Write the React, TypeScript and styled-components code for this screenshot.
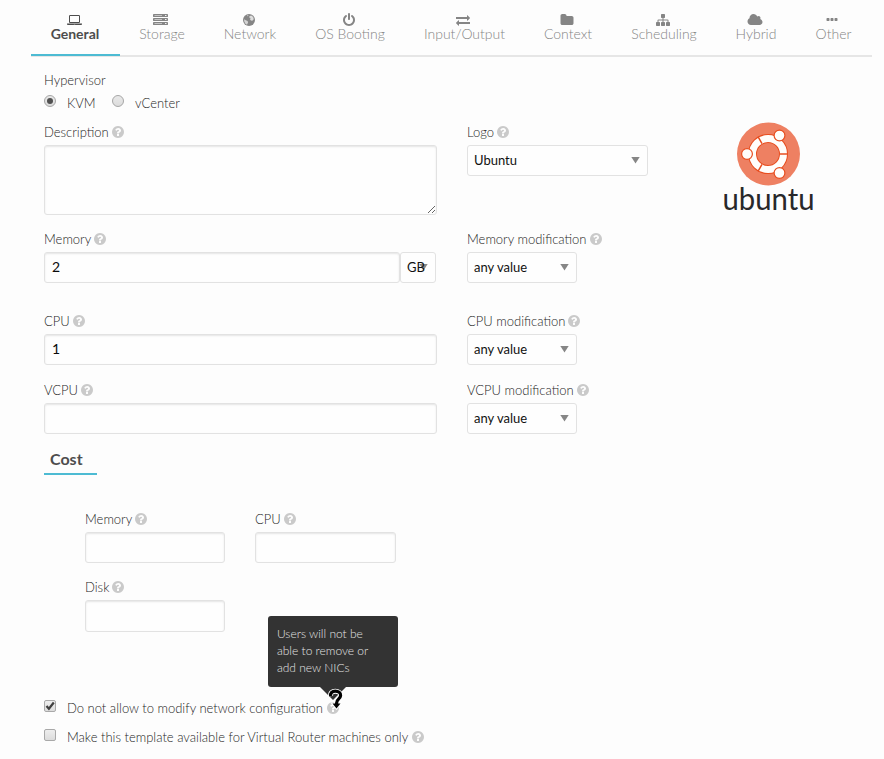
import React from "react";
import styled, { createGlobalStyle } from "styled-components";

const GlobalStyle = createGlobalStyle`
  *, *::before, *::after { box-sizing: border-box; }
  body {
    margin: 0;
    background: #fdfdfd;
    color: #4d4d4d;
    font-family: Lato, "Open Sans", sans-serif;
    font-size: 14px;
    font-weight: 300;
  }
`;

const Page = styled.main`
  width: 884px;
  height: 759px;
  overflow: hidden;
  padding-left: 31px;
`;

const Tabs = styled.nav`
  display: grid;
  grid-template-columns: 89px 84px 92px 108px 121px 86px 106px 78px 77px;
  width: 841px;
  height: 57px;
  border-bottom: 2px solid #e6e6e6;
`;

const Tab = styled.a<{ $active?: boolean }>`
  display: flex;
  flex-direction: column;
  align-items: center;
  height: 56px;
  padding-top: 13px;
  color: ${(p) => (p.$active ? "#4d4d4d" : "#858585")};
  font-weight: ${(p) => (p.$active ? 700 : 300)};
  line-height: 14px;
  white-space: nowrap;
  border-bottom: 2px solid ${(p) => (p.$active ? "#4dbbd3" : "transparent")};
  ${(p) => p.$active && "padding-right: 1px;"}
  svg { display: block; flex: none; margin-right: ${(p) => (p.$active ? 1 : 3)}px; }
`;

const Form = styled.form`
  padding: 12px 0 0 13px;
  color: #262626;
  font-size: 13px;
`;

const Label = styled.label`
  display: flex;
  align-items: center;
  gap: 3px;
  height: 24px;
  padding-bottom: 2px;
  line-height: 22px;
  white-space: nowrap;
`;

const Help = styled.svg`
  display: block;
  flex: none;
  width: 12px;
  height: 12px;
  fill: #cacaca;
`;

const Radios = styled.div`
  display: flex;
  align-items: center;
  height: 22px;
  padding-bottom: 2px;
`;

const Radio = styled.span`
  display: flex;
  width: 12px;
  height: 12px;
  margin-top: -4px;
  align-items: center;
  justify-content: center;
  border: 1px solid #a6a6a6;
  border-radius: 50%;
  background: linear-gradient(#e9e9e9, #dcdcdc);
`;

const Dot = styled.span`
  width: 6px;
  height: 6px;
  border-radius: 50%;
  background: #505050;
`;

const RadioText = styled.span<{ $width: number }>`
  width: ${(p) => p.$width}px;
  padding-left: 11px;
`;

const Row = styled.div<{ $height: number; $offset?: number }>`
  display: grid;
  grid-template-columns: 393px 181px 1fr;
  column-gap: 30px;
  align-items: start;
  height: ${(p) => p.$height}px;
  padding-top: ${(p) => p.$offset ?? 0}px;
`;

const Input = styled.input<{ $height?: number }>`
  display: block;
  width: 100%;
  height: ${(p) => p.$height ?? 31}px;
  padding: 0 7px 2px;
  border: 1px solid #e2e2e2;
  border-radius: 3px;
  background: #fefefe;
  box-shadow: inset 0 1px 2px rgba(10, 10, 10, 0.1);
  color: #0a0a0a;
  font: 400 14px Lato, sans-serif;
  outline: none;
`;

const TextArea = styled.textarea`
  display: block;
  width: 100%;
  height: 70px;
  border: 1px solid #e2e2e2;
  border-radius: 3px;
  background: #fefefe;
  box-shadow: inset 0 1px 2px rgba(10, 10, 10, 0.1);
  outline: none;
`;

const Group = styled.div`
  display: flex;
  padding-right: 1px;
`;

const Select = styled.div<{ $width: number }>`
  display: flex;
  flex: none;
  align-items: center;
  justify-content: space-between;
  width: ${(p) => p.$width}px;
  height: 31px;
  padding: 0 7px 1px 6px;
  border: 1px solid #e2e2e2;
  border-radius: 3px;
  background: #fefefe;
  color: #111;
  font-weight: 400;
  white-space: nowrap;
`;

const Arrow = styled.span`
  flex: none;
  width: 9px;
  height: 7px;
  background: #868686;
  clip-path: polygon(0 0, 100% 0, 50% 100%);
`;

const UnitText = styled.span`
  width: 12px;
  z-index: 1;
`;

const LogoBox = styled.div`
  padding: 1px 0 0 44px;
  svg { display: block; }
`;

const CostTitle = styled.h2`
  width: 53px;
  height: 27px;
  margin: 0;
  padding-left: 6px;
  border-bottom: 2px solid #4dbbd3;
  color: #4d4d4d;
  font-size: 16px;
  font-weight: 700;
  line-height: 21px;
`;

const CostGrid = styled.div`
  display: grid;
  grid-template-columns: 140px 141px;
  grid-template-rows: 68px 68px;
  column-gap: 30px;
  margin: 33px 0 0 41px;
`;

const Checks = styled.div`
  padding-top: 49px;
`;

const CheckRow = styled.div`
  display: flex;
  align-items: center;
  height: 29px;
`;

const Checkbox = styled.span`
  display: flex;
  width: 12px;
  height: 12px;
  margin: -4px 11px 0 0;
  border: 1px solid #a9a9a9;
  border-radius: 2px;
  background: linear-gradient(#eeeeee, #dcdcdc);
  svg { display: block; overflow: visible; }
`;

const CheckText = styled.span`
  margin-right: 4px;
  white-space: nowrap;
`;

const HelpAnchor = styled.span`
  position: relative;
  display: block;
`;

const Tooltip = styled.div`
  position: absolute;
  left: -59px;
  bottom: 27px;
  width: 130px;
  height: 71px;
  padding: 9px 9px;
  border-radius: 3px;
  background: #333;
  color: #e4e4e4;
  font-size: 12px;
  line-height: 17px;
  white-space: nowrap;
  &::after {
    content: "";
    position: absolute;
    left: 52px;
    top: 100%;
    border: 13px solid transparent;
    border-top-color: #333;
    border-bottom: 0;
  }
`;

const Pointer = styled.svg`
  position: absolute;
  left: 0;
  top: -13px;
  overflow: visible;
`;

const paths = {
  laptop:
    "M416 1280q-66 0-113-47t-47-113v-704q0-66 47-113t113-47h1088q66 0 113 47t47 113v704q0 66-47 113t-113 47h-1088zm-32-864v704q0 13 9.5 22.5t22.5 9.5h1088q13 0 22.5-9.5t9.5-22.5v-704q0-13-9.5-22.5t-22.5-9.5h-1088q-13 0-22.5 9.5t-9.5 22.5zm1376 928h160v96q0 40-47 68t-113 28h-1600q-66 0-113-28t-47-68v-96h1760zm-720 96q16 0 16-16t-16-16h-160q-16 0-16 16t16 16h160z",
  power:
    "M1664 896q0 156-61 298t-164 245-245 164-298 61-298-61-245-164-164-245-61-298q0-182 80.5-343t226.5-270q43-32 95.5-25t83.5 50q32 42 24.5 94.5t-49.5 84.5q-98 74-151.5 181t-53.5 228q0 104 40.5 198.5t109.5 163.5 163.5 109.5 198.5 40.5 198.5-40.5 163.5-109.5 109.5-163.5 40.5-198.5q0-121-53.5-228t-151.5-181q-42-32-49.5-84.5t24.5-94.5q31-43 84-50t95 25q146 109 226.5 270t80.5 343zm-640-768v640q0 52-38 90t-90 38-90-38-38-90v-640q0-52 38-90t90-38 90 38 38 90z",
  exchange:
    "M1792 1184v192q0 13-9.5 22.5t-22.5 9.5h-1376v192q0 13-9.5 22.5t-22.5 9.5q-12 0-24-10l-319-320q-9-9-9-22 0-14 9-23l320-320q9-9 23-9 13 0 22.5 9.5t9.5 22.5v192h1376q13 0 22.5 9.5t9.5 22.5zm0-544q0 14-9 23l-320 320q-9 9-23 9-13 0-22.5-9.5t-9.5-22.5v-192h-1376q-13 0-22.5-9.5t-9.5-22.5v-192q0-13 9.5-22.5t22.5-9.5h1376v-192q0-14 9-23t23-9q12 0 24 10l319 319q9 9 9 23z",
  folder:
    "M1728 608v704q0 92-66 158t-158 66h-1216q-92 0-158-66t-66-158v-960q0-92 66-158t158-66h320q92 0 158 66t66 158v32h672q92 0 158 66t66 158z",
  sitemap:
    "M1792 1248v320q0 40-28 68t-68 28h-320q-40 0-68-28t-28-68v-320q0-40 28-68t68-28h96v-192h-512v192h96q40 0 68 28t28 68v320q0 40-28 68t-68 28h-320q-40 0-68-28t-28-68v-320q0-40 28-68t68-28h96v-192h-512v192h96q40 0 68 28t28 68v320q0 40-28 68t-68 28h-320q-40 0-68-28t-28-68v-320q0-40 28-68t68-28h96v-192q0-52 38-90t90-38h512v-192h-96q-40 0-68-28t-28-68v-320q0-40 28-68t68-28h320q40 0 68 28t28 68v320q0 40-28 68t-68 28h-96v192h512q52 0 90 38t38 90v192h96q40 0 68 28t28 68z",
  cloud:
    "M1984 1152q0 159-112.5 271.5t-271.5 112.5h-1088q-185 0-316.5-131.5t-131.5-316.5q0-132 71-241.5t187-163.5q-2-28-2-43 0-212 150-362t362-150q158 0 286.5 88t187.5 230q70-62 166-62 106 0 181 75t75 181q0 75-41 138 129 30 213 134.5t84 239.5z",
  dots:
    "M576 736v192q0 40-28 68t-68 28h-192q-40 0-68-28t-28-68v-192q0-40 28-68t68-28h192q40 0 68 28t28 68zm512 0v192q0 40-28 68t-68 28h-192q-40 0-68-28t-28-68v-192q0-40 28-68t68-28h192q40 0 68 28t28 68zm512 0v192q0 40-28 68t-68 28h-192q-40 0-68-28t-28-68v-192q0-40 28-68t68-28h192q40 0 68 28t28 68z",
  question:
    "M1024 1376v-192q0-14-9-23t-23-9h-192q-14 0-23 9t-9 23v192q0 14 9 23t23 9h192q14 0 23-9t9-23zm256-672q0-88-55.5-163t-138.5-116-170-41q-243 0-371 213-15 24 8 42l132 100q7 6 19 6 16 0 25-12 53-68 86-92 34-24 86-24 48 0 85.5 26t37.5 59q0 38-20 61t-68 45q-63 28-115.5 86.5t-52.5 125.5v36q0 14 9 23t23 9h192q14 0 23-9t9-23q0-19 21.5-49.5t54.5-49.5q32-18 49-28.5t46-35 44.5-48 28-60.5 12.5-81zm384 192q0 209-103 385.5t-279.5 279.5-385.5 103-385.5-103-279.5-279.5-103-385.5 103-385.5 279.5-279.5 385.5-103 385.5 103 279.5 279.5 103 385.5z",
};

function Icon({ name, units = 1792 }: { name: keyof typeof paths; units?: number }) {
  return (
    <svg width={(14 * units) / 1792} height="14" viewBox={`0 0 ${units} 1792`} fill="currentColor">
      <path d={paths[name]} />
    </svg>
  );
}

function ServerIcon() {
  return (
    <svg width="15" height="14" viewBox="0 0 15 14">
      {[1, 5, 9].map((y) => (
        <g key={y}>
          <rect x="0" y={y} width="15" height="3" rx="0.4" fill="#858585" />
          <rect x="1.5" y={y + 1} width="7.5" height="1" fill="#c4c4c4" />
          <rect x="12" y={y + 1} width="1.5" height="1" fill="#f4f4f4" />
        </g>
      ))}
    </svg>
  );
}

function GlobeIcon() {
  return (
    <svg width="12" height="14" viewBox="0 0 12 14">
      <circle cx="6" cy="7" r="6" fill="#858585" />
      <path d="M6.6 3.1l1.7-.6 1.9 1.6.6 2.1-1.5 1.6-1.4-.2-.9-1.3.6-1.2-1.4-.6z" fill="#dedede" />
      <path d="M1.1 6.2l1.7 1 1.8.9.5 1.4-1.1 2.3-1.6-1.1-1.2-2.4z" fill="#d4d4d4" />
      <path d="M4.6 1.9l1.1.5-.9.9-1-.4z" fill="#c8c8c8" />
    </svg>
  );
}

function HelpIcon() {
  return (
    <Help viewBox="128 128 1536 1536">
      <path d={paths.question} />
    </Help>
  );
}

function Field({ label, children }: { label: string; children: React.ReactNode }) {
  return (
    <div>
      <Label>
        {label}
        <HelpIcon />
      </Label>
      {children}
    </div>
  );
}

function AnyValue() {
  return (
    <Select $width={110}>
      any value
      <Arrow />
    </Select>
  );
}

function UbuntuLogo() {
  return (
    <svg width="96" height="100" viewBox="0 0 96 100">
      <circle cx="46.5" cy="32" r="31.5" fill="#ee8062" />
      <circle cx="46" cy="32" r="15.5" fill="none" stroke="#e84e20" strokeWidth="9" />
      <circle cx="46" cy="32" r="15.5" fill="none" stroke="#fffdfb" strokeWidth="7" />
      <path d="M58 32h8M40 21.6l-4-7M40 42.4l-4 7" stroke="#e84e20" strokeWidth="1.5" />
      <g fill="#fffdfb" stroke="#e84e20" strokeWidth="1.2">
        <circle cx="25" cy="32" r="5.4" />
        <circle cx="57.5" cy="13.5" r="5.4" />
        <circle cx="57.5" cy="51" r="5.4" />
      </g>
      <text
        x="0.5"
        y="88"
        fontFamily="Lato, sans-serif"
        fontSize="30"
        fontWeight="400"
        fill="#28282a"
        textLength="92"
        lengthAdjust="spacingAndGlyphs"
      >
        ubuntu
      </text>
    </svg>
  );
}

function HelpPointer() {
  const hook = "M3.7 7.2C3 4 5.2 2.2 8.3 2.2s5.5 1.6 5.3 4.5c-.2 3.2-4 3.4-4 7.3v1";
  const head = "M5.5 14.5h8L9.5 19.5z";
  return (
    <Pointer width="17" height="22" viewBox="0 0 17 22">
      <path d={hook} fill="none" stroke="#fff" strokeWidth="5" />
      <path d={head} fill="#fff" stroke="#fff" strokeWidth="2" />
      <path d={hook} fill="none" stroke="#000" strokeWidth="3.2" />
      <path d={head} fill="#000" />
    </Pointer>
  );
}

export default function App() {
  return (
    <>
      <GlobalStyle />
      <Page>
        <Tabs>
          <Tab $active><Icon name="laptop" units={1920} />General</Tab>
          <Tab><ServerIcon />Storage</Tab>
          <Tab><GlobeIcon />Network</Tab>
          <Tab><Icon name="power" />OS Booting</Tab>
          <Tab><Icon name="exchange" />Input/Output</Tab>
          <Tab><Icon name="folder" />Context</Tab>
          <Tab><Icon name="sitemap" />Scheduling</Tab>
          <Tab><Icon name="cloud" units={2048} />Hybrid</Tab>
          <Tab><Icon name="dots" />Other</Tab>
        </Tabs>
        <Form>
          <Label>Hypervisor</Label>
          <Radios>
            <Radio><Dot /></Radio>
            <RadioText $width={56}>KVM</RadioText>
            <Radio />
            <RadioText $width={70}>vCenter</RadioText>
          </Radios>
          <Row $height={113} $offset={6}>
            <Field label="Description"><TextArea /></Field>
            <Field label="Logo">
              <Select $width={181}>Ubuntu<Arrow /></Select>
            </Field>
            <LogoBox><UbuntuLogo /></LogoBox>
          </Row>
          <Row $height={82}>
            <Field label="Memory">
              <Group>
                <Input defaultValue="2" />
                <Select $width={36}>
                  <UnitText>GB</UnitText>
                  <Arrow />
                </Select>
              </Group>
            </Field>
            <Field label="Memory modification"><AnyValue /></Field>
          </Row>
          <Row $height={69}>
            <Field label="CPU"><Input defaultValue="1" /></Field>
            <Field label="CPU modification"><AnyValue /></Field>
          </Row>
          <Row $height={69}>
            <Field label="VCPU"><Input /></Field>
            <Field label="VCPU modification"><AnyValue /></Field>
          </Row>
          <CostTitle>Cost</CostTitle>
          <CostGrid>
            <Field label="Memory"><Input /></Field>
            <Field label="CPU"><Input /></Field>
            <Field label="Disk"><Input $height={32} /></Field>
          </CostGrid>
          <Checks>
            <CheckRow>
              <Checkbox>
                <svg width="10" height="10" viewBox="0 0 10 10">
                  <path d="M1.5 5l2.4 2.8L8.8 1.5" fill="none" stroke="#404040" strokeWidth="2.2" />
                </svg>
              </Checkbox>
              <CheckText>Do not allow to modify network configuration</CheckText>
              <HelpAnchor>
                <HelpIcon />
                <Tooltip>
                  Users will not be<br />able to remove or<br />add new NICs
                </Tooltip>
                <HelpPointer />
              </HelpAnchor>
            </CheckRow>
            <CheckRow>
              <Checkbox />
              <CheckText>Make this template available for Virtual Router machines only</CheckText>
              <HelpIcon />
            </CheckRow>
          </Checks>
        </Form>
      </Page>
    </>
  );
}
